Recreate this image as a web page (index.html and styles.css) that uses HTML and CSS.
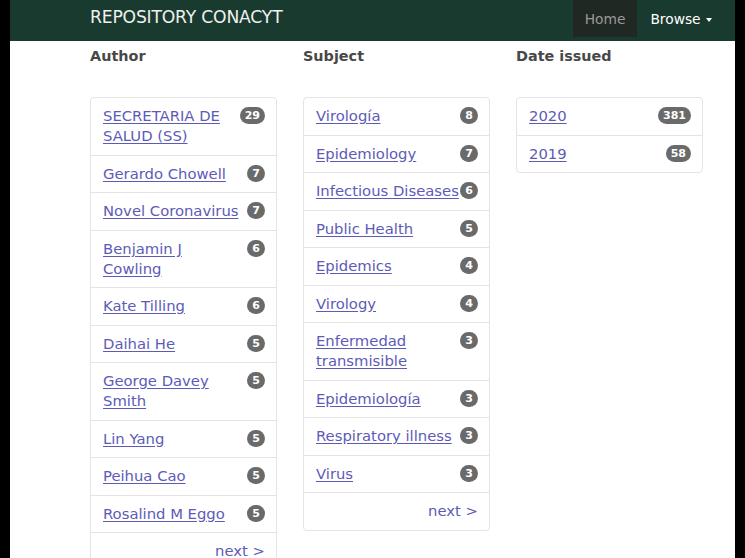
FILE: index.html
```html
<!DOCTYPE html>
<html lang="en">
<head>
<meta charset="utf-8">
<title>Repository CONACYT</title>
<link rel="stylesheet" href="styles.css">
</head>
<body>
<div class="page">
  <nav class="navbar">
    <a class="brand" href="#">REPOSITORY CONACYT</a>
    <ul class="nav">
      <li class="nav-item active"><a href="#">Home</a></li>
      <li class="nav-item"><a href="#">Browse <span class="caret"></span></a></li>
    </ul>
  </nav>
  <main class="columns">
    <section class="col">
      <h2 class="col-title">Author</h2>
      <ul class="list-group">
        <li class="item"><span class="badge">29</span><a href="#">SECRETARIA DE SALUD (SS)</a></li>
        <li class="item"><span class="badge">7</span><a href="#">Gerardo Chowell</a></li>
        <li class="item"><span class="badge">7</span><a href="#">Novel Coronavirus</a></li>
        <li class="item"><span class="badge">6</span><a href="#">Benjamin J<br>Cowling</a></li>
        <li class="item"><span class="badge">6</span><a href="#">Kate Tilling</a></li>
        <li class="item"><span class="badge">5</span><a href="#">Daihai He</a></li>
        <li class="item"><span class="badge">5</span><a href="#">George Davey Smith</a></li>
        <li class="item"><span class="badge">5</span><a href="#">Lin Yang</a></li>
        <li class="item"><span class="badge">5</span><a href="#">Peihua Cao</a></li>
        <li class="item"><span class="badge">5</span><a href="#">Rosalind M Eggo</a></li>
        <li class="item next"><a href="#">next &gt;</a></li>
      </ul>
    </section>
    <section class="col">
      <h2 class="col-title">Subject</h2>
      <ul class="list-group">
        <li class="item"><span class="badge">8</span><a href="#">Virología</a></li>
        <li class="item"><span class="badge">7</span><a href="#">Epidemiology</a></li>
        <li class="item"><span class="badge">6</span><a href="#">Infectious Diseases</a></li>
        <li class="item"><span class="badge">5</span><a href="#">Public Health</a></li>
        <li class="item"><span class="badge">4</span><a href="#">Epidemics</a></li>
        <li class="item"><span class="badge">4</span><a href="#">Virology</a></li>
        <li class="item"><span class="badge">3</span><a href="#">Enfermedad transmisible</a></li>
        <li class="item"><span class="badge">3</span><a href="#">Epidemiología</a></li>
        <li class="item"><span class="badge">3</span><a href="#">Respiratory illness</a></li>
        <li class="item"><span class="badge">3</span><a href="#">Virus</a></li>
        <li class="item next"><a href="#">next &gt;</a></li>
      </ul>
    </section>
    <section class="col">
      <h2 class="col-title">Date issued</h2>
      <ul class="list-group">
        <li class="item"><span class="badge">381</span><a href="#">2020</a></li>
        <li class="item"><span class="badge">58</span><a href="#">2019</a></li>
      </ul>
    </section>
  </main>
</div>
</body>
</html>
```

FILE: styles.css
```css
html, body {
  margin: 0;
  padding: 0;
  background: #000;
}

body {
  font-family: "DejaVu Sans", "Liberation Sans", sans-serif;
  font-size: 14.8px;
  line-height: 20px;
  color: #444;
}

.page {
  width: 725px;
  margin: 0 10px;
  min-height: 100vh;
  background: #fff;
}

.navbar {
  display: flex;
  align-items: flex-start;
  justify-content: space-between;
  height: 41px;
  background: #193a2f;
  padding: 0 10px 0 80px;
}

.brand {
  color: #f0f0f0;
  text-decoration: none;
  font-size: 17.2px;
  line-height: 20px;
  padding-top: 7px;
  letter-spacing: -0.2px;
}

.nav {
  display: flex;
  list-style: none;
  margin: 0;
  padding: 0;
}

.nav-item a {
  display: block;
  height: 37px;
  line-height: 38px;
  padding: 0 12px;
  font-size: 13.8px;
  color: #fff;
  text-decoration: none;
}

.nav-item.active a {
  background: #1f2823;
  color: #9a9a9a;
}

.nav-item + .nav-item a {
  padding: 0 13px;
}

.caret {
  display: inline-block;
  width: 0;
  height: 0;
  margin-left: 1px;
  vertical-align: middle;
  border-top: 4px solid #fff;
  border-left: 3px solid transparent;
  border-right: 3px solid transparent;
}

.columns {
  display: flex;
  align-items: flex-start;
  gap: 26px;
  padding-left: 80px;
}

.col {
  width: 187px;
}

.col-title {
  margin: 0 0 31px;
  padding-top: 5px;
  font-size: 14.4px;
  line-height: 20px;
  font-weight: bold;
  color: #484848;
}

.list-group {
  list-style: none;
  margin: 0;
  padding: 0;
  border-radius: 4px;
}

.item {
  border: 1px solid #e4e4e4;
  margin-bottom: -1px;
  padding: 8px 11px 8.5px 12px;
  line-height: 20px;
}

.item:first-child {
  border-top-left-radius: 4px;
  border-top-right-radius: 4px;
}

.item:last-child {
  border-bottom-left-radius: 4px;
  border-bottom-right-radius: 4px;
}

.item a {
  color: #5d5bb8;
  text-decoration: underline;
  text-underline-offset: 2px;
}

.badge {
  float: right;
  min-width: 7px;
  height: 17px;
  margin-top: 1px;
  padding: 0 5px;
  border-radius: 9px;
  background: #6a6a6a;
  color: #fff;
  font-size: 11px;
  font-weight: bold;
  line-height: 17px;
  text-align: center;
}

.item.next {
  text-align: right;
}

.item.next a {
  text-decoration: none;
}
```
